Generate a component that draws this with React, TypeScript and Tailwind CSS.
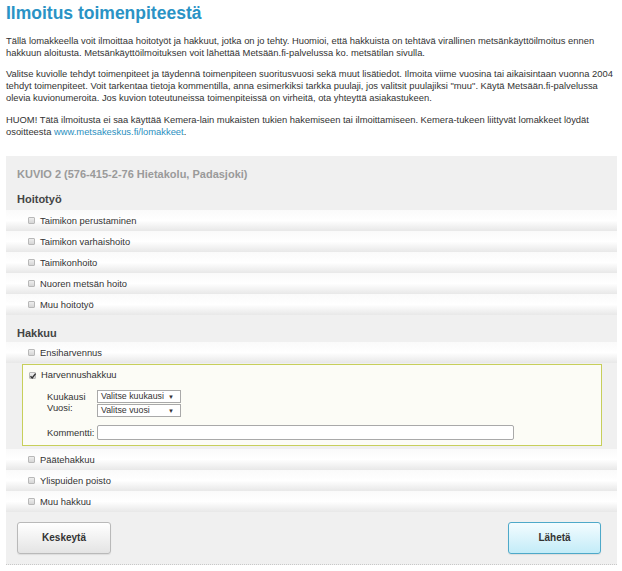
import React from 'react';

const Check = ({ checked = false }: { checked?: boolean }) => (
  <span className="relative inline-block w-[7px] h-[7px] shrink-0 rounded-[1px] border border-[#b8b8b8] bg-linear-to-b from-[#eeeeee] to-[#d6d6d6]">
    {checked && (
      <svg viewBox="0 0 8 8" className="absolute left-[-1px] top-[-1px] w-[8px] h-[8px]">
        <path d="M1.5 4.2 L3.2 6 L6.6 1.6" fill="none" stroke="#333" strokeWidth="1.4" />
      </svg>
    )}
  </span>
);

const Row = ({ label }: { label: string }) => (
  <div className="h-[21px] flex items-center gap-[5px] pl-[22px] bg-linear-to-b from-[#fafafa] via-white to-[#e8e8e8]">
    <Check />
    <span>{label}</span>
  </div>
);

const FakeSelect = ({ text }: { text: string }) => (
  <div className="w-[84px] h-[13px] bg-white border border-[#a9a9a9] flex items-center justify-between pl-[3px] pr-[6px] text-[8.8px] leading-[11px]">
    <span>{text}</span>
    <span className="text-[6px] leading-none">▼</span>
  </div>
);

export default function App() {
  return (
    <div className="w-[622px] h-[571px] overflow-hidden bg-white text-[#333] text-[9.4px] leading-[12px] font-['Liberation_Sans',Arial,sans-serif]">
      <h1 className="mt-[3px] px-[6px] text-[17.5px] leading-[20px] font-bold text-[#2a93c5]">Ilmoitus toimenpiteestä</h1>

      <div className="px-[6px] whitespace-nowrap">
        <p className="mt-[12px]">
          Tällä lomakkeella voit ilmoittaa hoitotyöt ja hakkuut, jotka on jo tehty. Huomioi, että hakkuista on tehtävä virallinen metsänkäyttöilmoitus ennen
          <br />
          hakkuun aloitusta. Metsänkäyttöilmoituksen voit lähettää Metsään.fi-palvelussa ko. metsätilan sivulla.
        </p>
        <p className="mt-[9px]">
          Valitse kuviolle tehdyt toimenpiteet ja täydennä toimenpiteen suoritusvuosi sekä muut lisätiedot. Ilmoita viime vuosina tai aikaisintaan vuonna 2004
          <br />
          tehdyt toimenpiteet. Voit tarkentaa tietoja kommentilla, anna esimerkiksi tarkka puulaji, jos valitsit puulajiksi "muu". Käytä Metsään.fi-palvelussa
          <br />
          olevia kuvionumeroita. Jos kuvion toteutuneissa toimenpiteissä on virheitä, ota yhteyttä asiakastukeen.
        </p>
        <p className="mt-[10px]">
          HUOM! Tätä ilmoitusta ei saa käyttää Kemera-lain mukaisten tukien hakemiseen tai ilmoittamiseen. Kemera-tukeen liittyvät lomakkeet löydät
          <br />
          osoitteesta <span className="text-[#2a8fc0]">www.metsakeskus.fi/lomakkeet</span>.
        </p>
      </div>

      <div className="mt-[18px] ml-[6px] w-[611px] bg-[#f0f0f0] border-b border-dotted border-[#c8c8c8] pb-[10px]">
        <div className="pt-[11px] px-[11px] text-[11px] leading-[14px] font-bold text-[#9a9a9a]">
          KUVIO 2 (576-415-2-76 Hietakolu, Padasjoki)
        </div>
        <div className="mt-[11px] mb-[4px] px-[11px] text-[11px] leading-[14px] font-bold text-[#444]">Hoitotyö</div>
        <Row label="Taimikon perustaminen" />
        <Row label="Taimikon varhaishoito" />
        <Row label="Taimikonhoito" />
        <Row label="Nuoren metsän hoito" />
        <Row label="Muu hoitotyö" />

        <div className="mt-[11px] mb-[2px] px-[11px] text-[11px] leading-[14px] font-bold text-[#444]">Hakkuu</div>
        <Row label="Ensiharvennus" />

        <div className="ml-[16px] mt-[1px] w-[580px] border border-[#c7cf5a] bg-[#fcfcf6] pl-[6px] pt-[3px] pb-[5px]">
          <div className="flex items-center gap-[5px] leading-[14px]">
            <Check checked />
            <span>Harvennushakkuu</span>
          </div>
          <div className="mt-[8px] flex pl-[18px]">
            <div className="w-[50px] pt-[1px] leading-[11px]">
              <div>Kuukausi</div>
              <div>Vuosi:</div>
            </div>
            <div className="flex flex-col gap-[1px]">
              <FakeSelect text="Valitse kuukausi" />
              <FakeSelect text="Valitse vuosi" />
            </div>
          </div>
          <div className="mt-[8px] flex items-center pl-[18px]">
            <div className="w-[50px]">Kommentti:</div>
            <div className="w-[417px] h-[15px] bg-white border border-[#a9a9a9] rounded-[2px]" />
          </div>
        </div>

        <div className="mt-[3px]">
          <Row label="Päätehakkuu" />
          <Row label="Ylispuiden poisto" />
          <Row label="Muu hakkuu" />
        </div>

        <div className="mt-[10px] flex justify-between pl-[11px] pr-[16px]">
          <button
            type="button"
            className="w-[94px] h-[32px] rounded-[3px] border border-[#b9b9b9] bg-linear-to-b from-white to-[#e4e4e4] text-[10px] font-bold text-[#333] shadow-[0_1px_1px_rgba(0,0,0,0.08)]"
          >
            Keskeytä
          </button>
          <button
            type="button"
            className="w-[93px] h-[32px] rounded-[3px] border border-[#4ea9c9] bg-linear-to-b from-[#f3fcff] to-[#c3ecf8] text-[10px] font-bold text-[#333] shadow-[0_1px_1px_rgba(0,0,0,0.08)]"
          >
            Lähetä
          </button>
        </div>
      </div>
    </div>
  );
}
